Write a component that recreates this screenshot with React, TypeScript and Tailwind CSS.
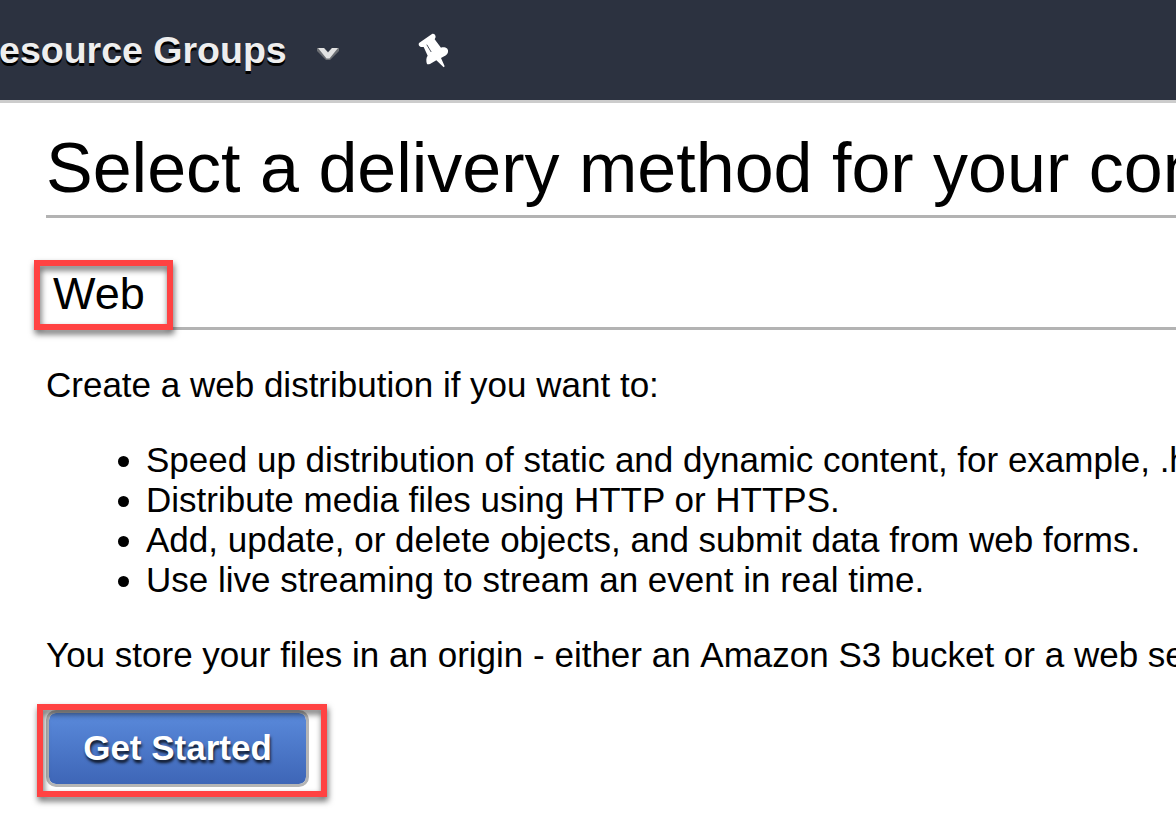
import React from "react";

const reasons = [
  "Speed up distribution of static and dynamic content, for example, .html, .css, .php, and graphics files.",
  "Distribute media files using HTTP or HTTPS.",
  "Add, update, or delete objects, and submit data from web forms.",
  "Use live streaming to stream an event in real time.",
];

function Pin() {
  return (
    <svg className="ml-[79px] h-[35px] w-[31px] shrink-0" viewBox="40 24 93 105" aria-hidden="true">
      <path
        fill="#fff"
        d="M43 54C40 61 45 67 54 66L57 66L69 92C64 97 64 109 67 117Q69 119 76 117L95 106L117 127L120 124L109 99L124 91C131 85 132 76 128 71C122 66 114 66 109 68L90 43L93 36C92 29 88 25 82 27Z"
      />
      <path fill="none" stroke="#2d3240" strokeWidth="2.5" strokeLinecap="round" d="M67 60L79 80" />
    </svg>
  );
}

export default function App() {
  return (
    <div className="h-[836px] w-[1176px] overflow-hidden bg-white font-['Liberation_Sans',Arial,sans-serif] text-black">
      <header className="flex h-[103px] items-center border-b-[3px] border-[#cccccc] bg-[#2c3240] whitespace-nowrap">
        <span className="-ml-[28px] pb-[1px] text-[37.5px] leading-[40px] font-bold text-[#eeeeee] [text-shadow:0_3px_0_#000]">
          Resource Groups
        </span>
        <svg className="mt-[7px] ml-[30px] h-[12px] w-[22px] shrink-0" viewBox="0 0 22 12" aria-hidden="true">
          <path fill="#6b6e73" d="M0 0H7L11 4L15 0H22V3L13 12H9L0 3Z" />
          <path fill="#e2e2e2" d="M1 0H7L11 4.5L15 0H21L12.5 10.5H9.5Z" />
        </svg>
        <Pin />
      </header>

      <main className="pl-[46px] whitespace-nowrap">
        <h1 className="h-[115px] border-b-[3px] border-[#b3b3b3] pt-[25px] text-[70px] leading-[80px]">
          Select a delivery method for your content.
        </h1>
        <div className="relative h-[112px] border-b-[3px] border-[#b3b3b3] pt-[51px] pl-[7px]">
          <h2 className="text-[45px] leading-[50px]">Web</h2>
          <div className="absolute top-[42px] -left-[12px] h-[70px] w-[139px] border-[6px] border-[#ff4242] drop-shadow-[1px_4px_3px_rgba(0,0,0,0.6)]" />
        </div>
        <div className="pt-[35px] text-[35px] leading-[40px]">
          <p>Create a web distribution if you want to:</p>
          <ul className="mt-[35px]">
            {reasons.map((reason) => (
              <li key={reason} className="flex items-center pl-[72px]">
                <span className="mt-[2px] mr-[17px] h-[11px] w-[11px] shrink-0 rounded-full bg-black" />
                {reason}
              </li>
            ))}
          </ul>
          <p className="mt-[35px]">
            You store your files in an origin - either an <span className="inline-block">Amazon</span> S3 bucket or a
            web server.
          </p>
        </div>
        <div className="relative mt-[35px]">
          <button className="block h-[77px] w-[263px] rounded-[10px] border-[3px] border-[#b5b5b5] bg-linear-to-b from-[#5a8adb] to-[#3e66b7] bg-clip-padding pb-[2px] text-[35px] leading-[40px] font-bold text-white [text-shadow:1px_3px_3px_rgba(0,0,0,0.8)]">
            Get Started
          </button>
          <div className="absolute -top-[6px] -left-[9px] h-[93px] w-[290px] border-[6px] border-[#ff4242] drop-shadow-[1px_4px_3px_rgba(0,0,0,0.6)]" />
        </div>
      </main>
    </div>
  );
}
